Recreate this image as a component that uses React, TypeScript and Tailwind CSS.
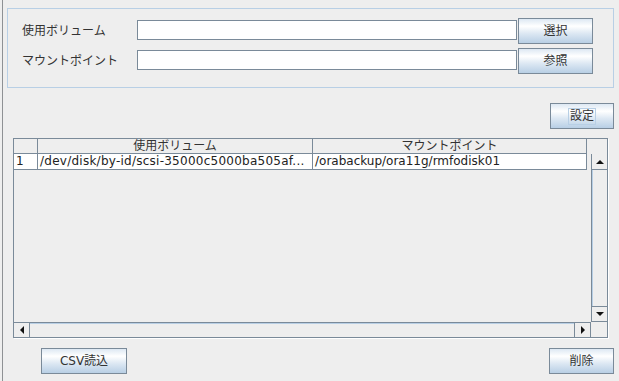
import React from 'react';

const btn =
  "h-[26px] border border-[#7a8a99] bg-[linear-gradient(180deg,#dde8f3_0%,#ffffff_30%,#dde8f3_60%,#b8cfe5_100%)] text-[12px] text-[#333] flex items-center justify-center";

const Arrow = ({ dir }: { dir: 'up' | 'down' | 'left' | 'right' }) => {
  const pts = {
    up: '0,4 8,4 4,0',
    down: '0,0 8,0 4,4',
    left: '4,0 4,8 0,4',
    right: '0,0 0,8 4,4',
  }[dir];
  const vertical = dir === 'up' || dir === 'down';
  return (
    <svg width={vertical ? 8 : 4} height={vertical ? 4 : 8} viewBox={vertical ? '0 0 8 4' : '0 0 4 8'}>
      <polygon points={pts} fill="#111" />
    </svg>
  );
};

const FieldRow = ({ label, action, first }: { label: string; action: string; first?: boolean }) => (
  <div className={first ? "flex h-[26px]" : "flex h-[26px] mt-[4px]"}>
    <div className="w-[115px] leading-[26px] text-[12px] text-[#333]">{label}</div>
    <div className="w-[380px] h-[20px] mt-[2px] bg-white border border-[#7a8a99]" />
    <button className={btn + " ml-[1px] w-[75px]"}>{action}</button>
  </div>
);

export default function App() {
  return (
    <div
      className="w-[619px] h-[381px] bg-[#eeeeee] overflow-hidden pl-[2px]"
      style={{ fontFamily: '"DejaVu Sans", "Noto Sans CJK JP", sans-serif' }}
    >
      <div className="h-full border-l border-[#8e9194] flex flex-col">
        {/* input panel */}
        <div className="ml-[4px] mt-[8px] w-[607px] h-[80px] border border-[#b8cfe5] pt-[9px] pl-[14px]">
          <FieldRow label="使用ボリューム" action="選択" first />
          <FieldRow label="マウントポイント" action="参照" />
        </div>

        <div className="mt-[15px] flex justify-end pr-[5px]">
          <button className={btn + " w-[64px]"}>
            <span className="border border-[#b8cfe5] px-[1px] leading-[15px]">設定</span>
          </button>
        </div>

        {/* table */}
        <div className="mt-[9px] ml-[10px] w-[595px] h-[200px] border border-[#7a8a99] shadow-[1px_1px_0_#ffffff] flex flex-col text-[12px]">
          <div className="flex h-[15px]">
            <div className="w-[24px] border-r border-b border-[#7a8a99]" />
            <div className="w-[275px] border-r border-b border-[#7a8a99] text-center leading-[14px] text-[#333]">使用ボリューム</div>
            <div className="w-[274px] border-r border-b border-[#7a8a99] text-center leading-[14px] text-[#333]">マウントポイント</div>
          </div>
          <div className="flex flex-1">
            <div className="w-[577px]">
              <div className="flex h-[16px] bg-white w-[573px] text-[#222]">
                <div className="w-[24px] border-r border-b border-[#7a8a99] pl-[2px] leading-[15px]">1</div>
                <div className="w-[275px] border-r border-b border-[#7a8a99] pl-[2px] leading-[15px] whitespace-nowrap overflow-hidden tracking-[0.25px]">/dev/disk/by-id/scsi-35000c5000ba505af...</div>
                <div className="w-[274px] border-r border-b border-[#7a8a99] pl-[2px] leading-[15px] whitespace-nowrap overflow-hidden">/orabackup/ora11g/rmfodisk01</div>
              </div>
            </div>
            <div className="w-[16px] border-l border-[#7a8a99] flex flex-col">
              <div className="h-[16px] border-b border-[#7a8a99] flex items-center justify-center">
                <Arrow dir="up" />
              </div>
              <div className="flex-1 border-l border-[#b8cfe5]" />
              <div className="h-[16px] border-t border-b border-[#7a8a99] flex items-center justify-center">
                <Arrow dir="down" />
              </div>
            </div>
          </div>
          <div className="flex h-[15px]">
            <div className="w-[577px] border-t border-r border-[#7a8a99] flex">
              <div className="w-[16px] border-r border-[#7a8a99] flex items-center justify-center">
                <Arrow dir="left" />
              </div>
              <div className="flex-1 border-t border-[#b8cfe5]" />
              <div className="w-[16px] border-l border-[#7a8a99] flex items-center justify-center">
                <Arrow dir="right" />
              </div>
            </div>
            <div className="flex-1" />
          </div>
        </div>

        <div className="mt-[10px] flex justify-between pl-[38px] pr-[5px]">
          <button className={btn + " w-[86px]"}>CSV読込</button>
          <button className={btn + " w-[65px]"}>削除</button>
        </div>
      </div>
    </div>
  );
}
